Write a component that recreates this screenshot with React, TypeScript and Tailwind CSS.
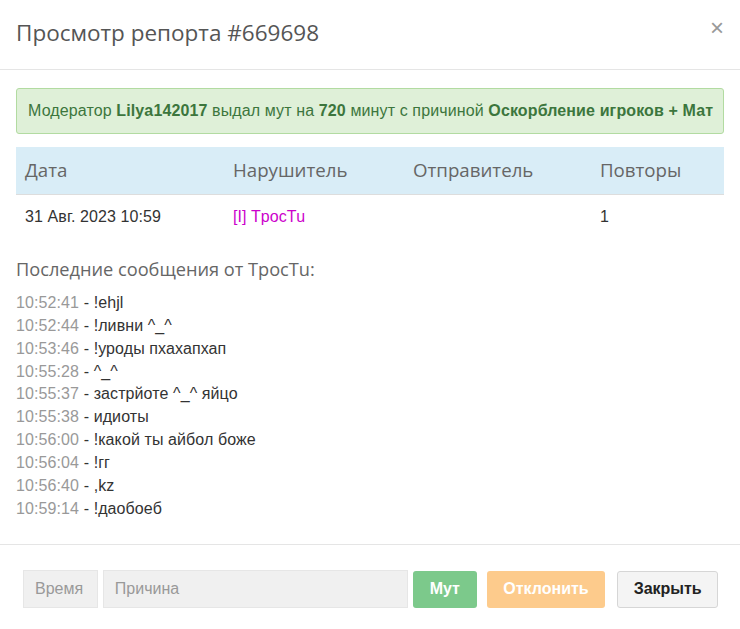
import React from "react";

const msgs: [string, string][] = [
  ["10:52:41", "!ehjl"],
  ["10:52:44", "!ливни ^_^"],
  ["10:53:46", "!уроды пхахапхап"],
  ["10:55:28", "^_^"],
  ["10:55:37", "застрйоте ^_^ яйцо"],
  ["10:55:38", "идиоты"],
  ["10:56:00", "!какой ты айбол боже"],
  ["10:56:04", "!гг"],
  ["10:56:40", ",kz"],
  ["10:59:14", "!даобоеб"],
];

export default function App() {
  return (
    <div className="w-[740px] h-[629px] bg-white text-[#333] font-['Liberation_Sans',Arial,sans-serif] text-[16px] leading-[1.42857] overflow-hidden">
      <div className="h-[70px] border-b border-[#e5e5e5] flex items-center justify-between pl-[16px] pr-[16px]">
        <div className="font-['Open_Sans',sans-serif] text-[22.5px] text-[#555] -mt-[2px]">Просмотр репорта #669698</div>
        <div className="text-[24px] text-[#999] leading-none -mt-[14px]">×</div>
      </div>
      <div className="px-[16px] pt-[18px]">
        <div className="h-[46px] bg-[#dff0d8] border border-[#b2dba1] rounded-[3px] flex items-center pl-[11px] text-[#3c763d] tracking-[0.12px]">
          <span>
            Модератор <b>Lilya142017</b> выдал мут на <b>720</b> минут с причиной <b>Оскорбление игроков + Мат</b>
          </span>
        </div>
        <div className="mt-[13px]">
          <div className="h-[48px] bg-[#d9edf7] grid grid-cols-[208px_180px_187px_1fr] items-center font-['Open_Sans',sans-serif] text-[18.7px] text-[#666] border-b border-[#ddd]">
            <div className="pl-[9px]">Дата</div>
            <div className="pl-[9px]">Нарушитель</div>
            <div className="pl-[9px]">Отправитель</div>
            <div className="pl-[9px]">Повторы</div>
          </div>
          <div className="h-[44px] grid grid-cols-[208px_180px_187px_1fr] items-center tracking-[0.1px]">
            <div className="pl-[9px]">31 Авг. 2023 10:59</div>
            <div className="pl-[9px] text-[#cc00cc]">[I] TpocTu</div>
            <div className="pl-[9px]"></div>
            <div className="pl-[9px]">1</div>
          </div>
        </div>
        <div className="mt-[17px] font-['Open_Sans',sans-serif] text-[18.2px] leading-[26px] text-[#666]">Последние сообщения от ТросTu:</div>
        <div className="mt-[10px] tracking-[0.1px]">
          {msgs.map(([t, m]) => (
            <div key={t}>
              <span className="text-[#999]">{t}</span> - {m}
            </div>
          ))}
        </div>
      </div>
      <div className="mt-[24px] border-t border-[#e5e5e5] pt-[25px] pl-[23px] pr-[22px] flex items-center">
        <div className="w-[75px] h-[38px] bg-[#f0f0f0] border border-[#e6e6e6] flex items-center pl-[11px] text-[#999]">Время</div>
        <div className="ml-[5px] w-[306px] h-[38px] bg-[#f0f0f0] border border-[#e6e6e6] flex items-center pl-[11px] text-[#999]">Причина</div>
        <div className="ml-[5px] w-[64px] h-[37px] bg-[#7cc98b] rounded-[3px] flex items-center justify-center text-white font-bold">Мут</div>
        <div className="ml-[10px] w-[119px] h-[37px] bg-[#fdcb8c] rounded-[3px] flex items-center justify-center text-white font-bold">Отклонить</div>
        <div className="ml-[12px] w-[101px] h-[37px] bg-[#f4f4f4] border border-[#d6d6d6] rounded-[3px] flex items-center justify-center text-[#222] font-bold">Закрыть</div>
      </div>
    </div>
  );
}
